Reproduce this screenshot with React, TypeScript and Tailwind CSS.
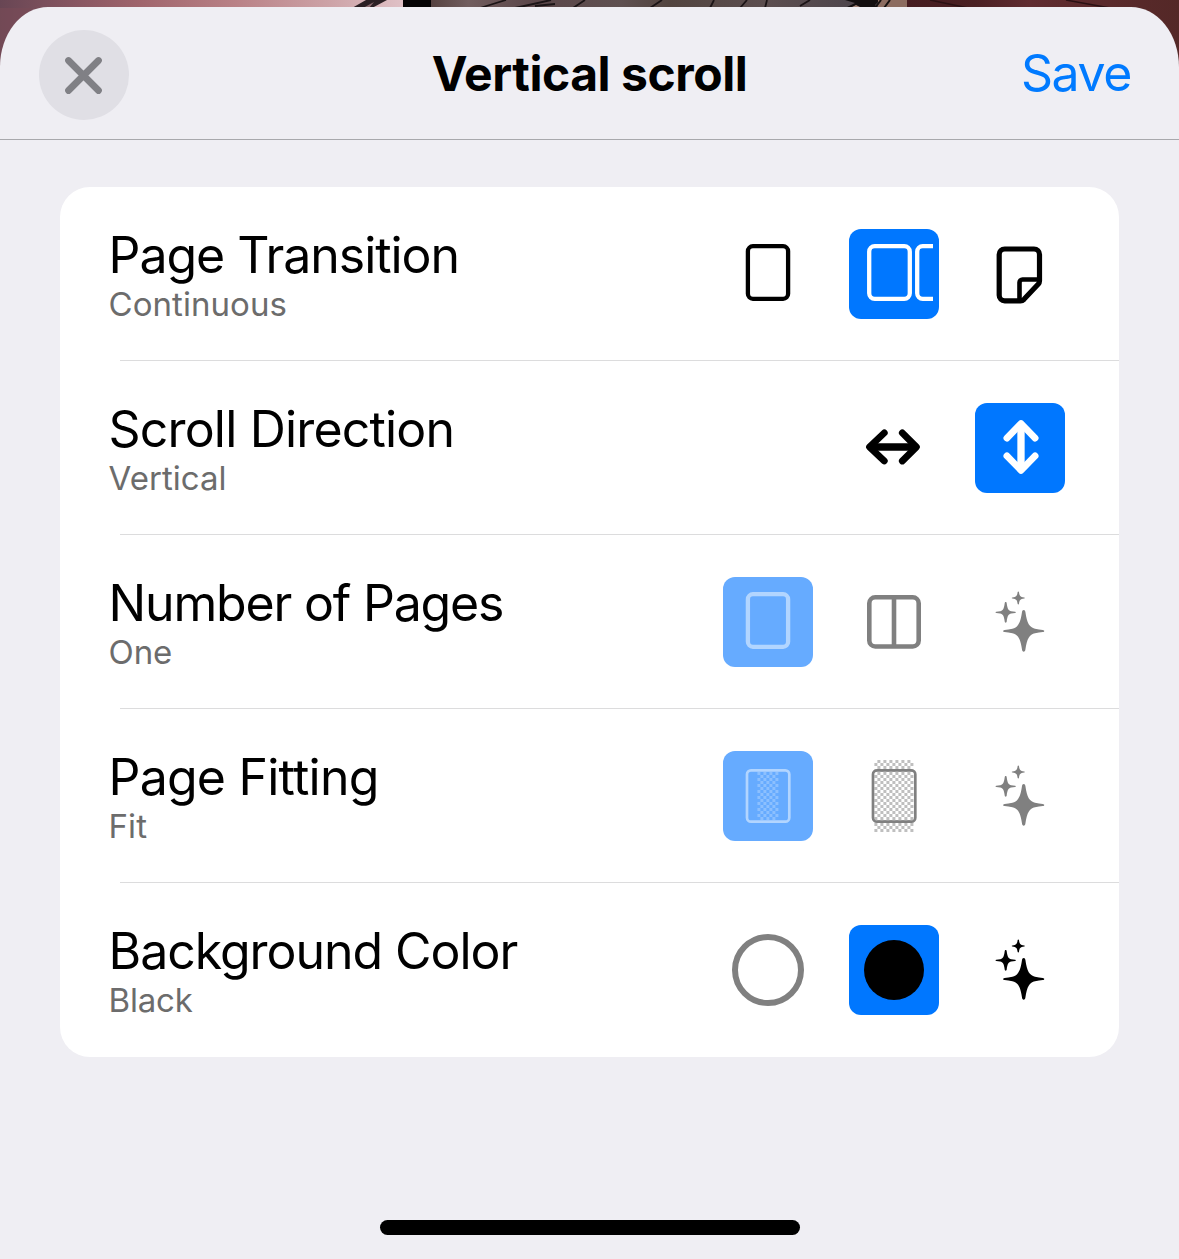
import React from "react";

type IconProps = { className?: string };

function Icon({ children, className = "" }: { children: React.ReactNode; className?: string }) {
  return (
    <svg viewBox="0 0 90 90" className={`size-[90px] ${className}`} fill="none" stroke="currentColor">
      {children}
    </svg>
  );
}

const Page = (p: IconProps) => (
  <Icon {...p}>
    <rect x="24.9" y="17.2" width="40.2" height="52.600" rx="5" strokeWidth="4.300" />
  </Icon>
);

const Strip = () => (
  <Icon>
    <rect x="20.200" y="17.200" width="40.600" height="52.600" rx="5.500" strokeWidth="4.300" />
    <path d="M84 17.200H73.700a5.500 5.500 0 0 0-5.500 5.500v41.600a5.500 5.500 0 0 0 5.500 5.500H84" strokeWidth="4.300" />
  </Icon>
);

const Curl = () => (
  <Icon>
    <path
      d="M29.700 20H59a5.500 5.500 0 0 1 5.500 5.500V52c0 1.300-.5 2.400-1.400 3.300L49 70.300c-1 1-2.200 1.500-3.500 1.500H29.700a5.500 5.500 0 0 1-5.500-5.500V25.500a5.500 5.500 0 0 1 5.500-5.500z"
      strokeWidth="5.200"
    />
    <path d="M44.500 71V53.500a3 3 0 0 1 3-3H64" strokeWidth="4.600" />
  </Icon>
);

const ArrowsH = () => (
  <Icon>
    <path d="M35.300 29.900 20.500 44l14.800 14M53.300 29.900 67.400 44 53.300 58" strokeWidth="6.800" strokeLinecap="round" strokeLinejoin="round" />
    <path d="M21 44h46" strokeWidth="7.300" />
  </Icon>
);

const ArrowsV = () => (
  <Icon>
    <path d="M31.900 35.100 46 20.500l14.100 14.600M31.900 52.900 46 67.300l14.100-14.400" strokeWidth="6.800" strokeLinecap="round" strokeLinejoin="round" />
    <path d="M46 21v46" strokeWidth="7.300" />
  </Icon>
);

const Spread = () => (
  <Icon>
    <rect x="20.300" y="20.300" width="49.400" height="49.200" rx="6" strokeWidth="4.600" />
    <path d="M45 20v50" strokeWidth="4.600" />
  </Icon>
);

const Sparkles = () => (
  <Icon>
    <g fill="currentColor" stroke="none">
      <path d="M48.700 33c1 0 1.500.8 1.700 2.100C52 46.500 54.500 50.500 60 51.700c2.800.600 5.300.900 7.800 1.200 2 .3 2 1.900 0 2.200-2.500.300-5 .600-7.800 1.200C54.500 57.500 52 61.500 50.400 72.600c-.2 1.300-.7 2.100-1.700 2.100s-1.500-.8-1.700-2.100C45.400 61.500 42.900 57.500 37.400 56.300c-2.800-.600-5.300-.900-7.800-1.200-2-.3-2-1.900 0-2.200 2.500-.300 5-.600 7.800-1.200C42.900 50.500 45.400 46.500 47 35.100c.2-1.300.7-2.100 1.700-2.100z" />
      <path d="M30.700 25c.6 0 .9.500 1 1.200.7 5.700 1.900 7.400 4.500 8 1.300.3 2.600.4 3.900.6 1.200.2 1.200.9 0 1.100-1.300.2-2.600.3-3.900.6-2.600.6-3.800 2.300-4.500 8-.1.700-.4 1.200-1 1.200s-.9-.5-1-1.200c-.7-5.700-1.900-7.400-4.500-8-1.300-.3-2.600-.4-3.900-.6-1.200-.2-1.200-.9 0-1.100 1.300-.2 2.600-.3 3.900-.6 2.600-.6 3.800-2.300 4.500-8 .1-.7.400-1.200 1-1.200z" />
      <path d="M43.300 14.500c.4 0 .6.300.7.800.5 3.700 1.200 4.600 5.200 5.200.9.200.9.800 0 1-4 .6-4.700 1.500-5.200 5.200-.1.500-.3.800-.7.800s-.6-.3-.7-.8c-.5-3.700-1.200-4.600-5.200-5.200-.9-.2-.9-.8 0-1 4-.6 4.700-1.500 5.200-5.200.1-.5.300-.8.700-.8z" />
    </g>
  </Icon>
);

function Checker({ x, y, cols, rows, phase, opacity }: { x: number; y: number; cols: number; rows: number; phase: number; opacity: number }) {
  let d = "";
  for (let r = 0; r < rows; r++)
    for (let c = 0; c < cols; c++) if ((r + c + phase) % 2 === 0) d += `M${x + c * 3} ${y + r * 3}h3v3h-3z`;
  return <path d={d} fill="currentColor" stroke="none" opacity={opacity} />;
}

const Fit = () => (
  <Icon>
    <Checker x={34.400} y={21} cols={7} rows={16} phase={0} opacity={0.5} />
    <rect x="24" y="19.300" width="42.300" height="51.400" rx="4" strokeWidth="2.700" />
  </Icon>
);

const Fill = () => (
  <Icon>
    <Checker x={25.400} y={9} cols={13} rows={24} phase={1} opacity={0.5} />
    <rect x="24" y="19.300" width="42.300" height="51.400" rx="4" strokeWidth="2.700" />
  </Icon>
);

const Ring = () => (
  <Icon className="text-[#808080]">
    <circle cx="45" cy="45" r="33" strokeWidth="6" />
  </Icon>
);

const Disc = () => (
  <Icon className="text-black">
    <circle cx="45" cy="45" r="30" fill="currentColor" stroke="none" />
  </Icon>
);

type Row = {
  title: string;
  value: string;
  spacing: string;
  valueSpacing: string;
  icons: React.FC[];
  selected: number;
  disabled?: boolean;
};

const rows: Row[] = [
  { title: "Page Transition", value: "Continuous", spacing: "tracking-[-1.05px]", valueSpacing: "tracking-[0.05px]", icons: [Page, Strip, Curl], selected: 1 },
  { title: "Scroll Direction", value: "Vertical", spacing: "tracking-[-0.82px]", valueSpacing: "tracking-[0.05px]", icons: [ArrowsH, ArrowsV], selected: 1 },
  { title: "Number of Pages", value: "One", spacing: "tracking-[-1.18px]", valueSpacing: "tracking-[-0.1px]", icons: [Page, Spread, Sparkles], selected: 0, disabled: true },
  { title: "Page Fitting", value: "Fit", spacing: "tracking-[-0.77px]", valueSpacing: "tracking-[0.1px]", icons: [Fit, Fill, Sparkles], selected: 0, disabled: true },
  { title: "Background Color", value: "Black", spacing: "tracking-[-1.05px]", valueSpacing: "tracking-[-0.2px]", icons: [Ring, Disc, Sparkles], selected: 1 },
];

function SettingRow({ row, last }: { row: Row; last: boolean }) {
  return (
    <div className="relative flex h-[174px] items-start justify-between pr-[54px] pl-[48.5px]">
      <div className="flex flex-col pt-[38px]">
        <span className={`h-[59px] text-[50px] leading-[60px] whitespace-nowrap text-black ${row.spacing}`}>{row.title}</span>
        <span className={`h-10 text-[33px] leading-[40px] whitespace-nowrap text-[#6c6c6c] ${row.valueSpacing}`}>{row.value}</span>
      </div>
      <div className="flex gap-9 pt-[42px]">
        {row.icons.map((I, i) => {
          const on = i === row.selected;
          const tone = row.disabled
            ? on
              ? "bg-[#66abff] text-[#b2d5ff]"
              : "text-[#808080]"
            : on
              ? "bg-[#0077ff] text-white"
              : "text-black";
          return (
            <button key={i} className={`size-[90px] rounded-xl ${tone}`}>
              <I />
            </button>
          );
        })}
      </div>
      {!last && <div className="absolute right-0 bottom-0 left-[60px] h-px bg-[#dcdcdd]" />}
    </div>
  );
}

function Backdrop() {
  return (
    <svg className="absolute inset-x-0 top-0 h-20 w-full" viewBox="0 0 1179 80" preserveAspectRatio="none">
      <defs>
        <linearGradient id="sky">
          <stop offset="0" stopColor="#684654" />
          <stop offset=".07" stopColor="#8a5762" />
          <stop offset=".12" stopColor="#a0656c" />
          <stop offset=".2" stopColor="#b98186" />
          <stop offset=".28" stopColor="#cda3a7" />
          <stop offset=".34" stopColor="#dfc0c5" />
        </linearGradient>
        <linearGradient id="hair">
          <stop offset="0" stopColor="#55413f" />
          <stop offset=".08" stopColor="#715d5e" />
          <stop offset=".22" stopColor="#5b4649" />
          <stop offset=".4" stopColor="#5f5050" />
          <stop offset=".5" stopColor="#52443f" />
          <stop offset=".7" stopColor="#5c4e4f" />
          <stop offset="1" stopColor="#45404a" />
        </linearGradient>
        <linearGradient id="cloth">
          <stop offset="0" stopColor="#451c20" />
          <stop offset=".25" stopColor="#4a2023" />
          <stop offset=".45" stopColor="#602c30" />
          <stop offset="1" stopColor="#542827" />
        </linearGradient>
      </defs>
      <rect width="1179" height="80" fill="url(#sky)" />
      <rect y="8" width="30" height="72" fill="#7a4b57" opacity=".6" />
      <path d="M352 8 366 0h21l-15 8z" fill="#2b2024" />
      <path d="M363 8 374 2l-5 6z" fill="#8b6c70" />
      <rect x="430" width="478" height="8" fill="url(#hair)" />
      <path d="M403 0h28v8h-28z" fill="#050304" />
      <path d="M480 8 506 0M515 8l36-8M535 6l20-2M573 8l12-8M650 8l12-8M710 8l4-8M740 8l7-8M765 8l2-8M800 6l10-6" stroke="#1b1416" strokeWidth="1.800" />
      <path d="M845 0h35l-5 5 2 3h-32l10-5z" fill="#120e0f" />
      <path d="M850 8l6-3 6 3z" fill="#a08074" />
      <path d="M878 0h29v8h-29z" fill="#8c6c60" />
      <path d="M881 0l-6 8M890 0l-6 8" stroke="#15100f" strokeWidth="2" />
      <rect x="907" width="272" height="80" fill="url(#cloth)" />
      <path d="M930 0 968 8M1066 0l44 8" stroke="#2b1114" strokeWidth="1.500" />
    </svg>
  );
}

export default function App() {
  return (
    <div className="relative h-[1259px] w-[1179px] overflow-hidden bg-[#efeef3] font-['Inter',sans-serif]">
      <Backdrop />
      <div className="relative flex h-full flex-col pt-[7px]">
        <div className="flex min-h-0 flex-1 flex-col rounded-t-[48px_60px] bg-[#efeef3]">
          <header className="grid h-[133px] shrink-0 grid-cols-3 border-b border-[#a8a8ac] px-[39px]">
            <button className="mt-[23px] size-[90px] rounded-full bg-[#e0dfe5]">
              <svg viewBox="0 0 90 90" className="size-[90px]" fill="none" stroke="#808085" strokeWidth="6.800" strokeLinecap="round">
                <path d="M29.500 30.500 59.500 60.500M59.500 30.500 29.500 60.500" />
              </svg>
            </button>
            <h1 className="mt-[37px] justify-self-center text-[48px] leading-[60px] font-bold tracking-[-0.45px] whitespace-nowrap text-black">
              Vertical scroll
            </h1>
            <button className="mt-[36px] mr-[9px] h-[60px] justify-self-end text-[50px] leading-[60px] tracking-[-1.400px] text-[#007aff]">Save</button>
          </header>
          <main className="mx-[60px] mt-[47px] overflow-hidden rounded-[30px] bg-white">
            {rows.map((row, i) => (
              <SettingRow key={row.title} row={row} last={i === rows.length - 1} />
            ))}
          </main>
          <div className="mx-auto mt-auto mb-6 h-[15px] w-[420px] rounded-full bg-black" />
        </div>
      </div>
    </div>
  );
}
